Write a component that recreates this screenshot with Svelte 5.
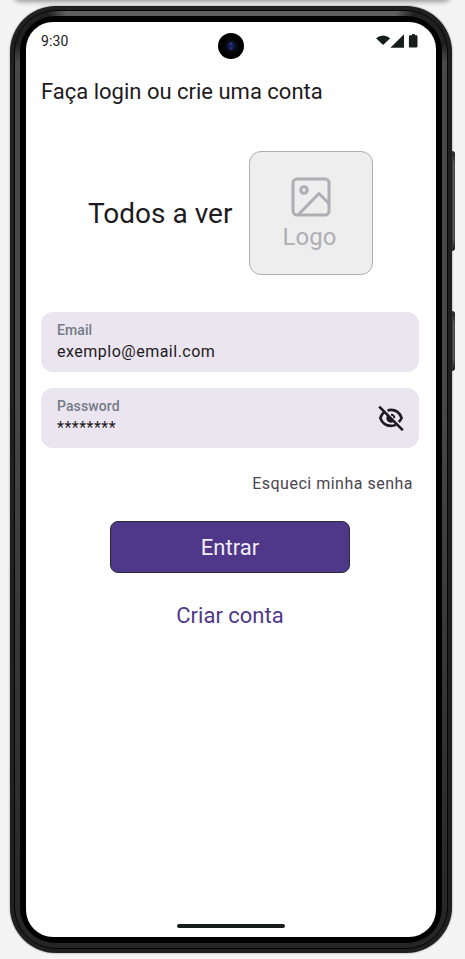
<script>
  let email = $state('exemplo@email.com');
  let password = $state('********');
</script>

<div class="stage">
  <div class="topshade"></div>
  <div class="side volume"></div>
  <div class="side power"></div>
  <div class="shell">
    <div class="rim">
      <div class="bezel">
        <main class="screen">
          <header class="status">
            <span>9:30</span>
            <svg width="44" height="16" viewBox="0 0 44 16" fill="#171d1b">
              <path d="M1 5.2Q8 -0.2 15.2 5.2L8.1 12Z" />
              <path d="M29 1.2V14.8H15.4Z" />
              <path d="M35.2 2.2h1.9V1.1h2.8v1.1h1.3q1.3 0 1.3 1.3v9.8q0 1.3-1.3 1.3h-6q-1.3 0-1.3-1.3V3.5q0-1.3 1.3-1.3Z" />
            </svg>
          </header>
          <h1>Faça login ou crie uma conta</h1>

          <section class="brand">
            <h2>Todos a ver</h2>
            <div class="logo">
              <svg width="40" height="40" viewBox="0 0 40 40" fill="none" stroke="#aeaeb5" stroke-width="3">
                <rect x="2" y="2" width="36" height="36" rx="4" />
                <circle cx="13" cy="13" r="3.3" />
                <path d="M7 38 28 16.5 38 26.5" stroke-linejoin="round" />
              </svg>
              <span>Logo</span>
            </div>
          </section>

          <form>
            <div class="field">
              <div class="label">Email</div>
              <div class="value">{email}</div>
            </div>
            <div class="field">
              <div class="label">Password</div>
              <div class="value">{password}</div>
              <svg class="eye" width="26" height="26" viewBox="0 0 26 26" fill="none" stroke="#1d1b20" stroke-width="2.6">
                <path d="M9.5 5.5Q11.2 4.9 13 4.9C18 4.9 21.8 8 23.6 13Q22.6 15.2 20.8 17" />
                <path d="M6.2 7Q3.6 9.2 2.3 13C4.2 18 8 20.9 13 20.9Q15.6 20.9 17.8 19.9" />
                <path d="M9.7 10.1A4.4 4.4 0 1 0 16.2 16Z" fill="#1d1b20" stroke="none" />
                <path d="M13 9.7A3.5 3.5 0 0 1 16.4 13.1" stroke-width="1.8" />
                <path d="M1.2 1.6 24.8 25.2" />
              </svg>
            </div>
            <div class="forgot">Esqueci minha senha</div>
            <button type="button" class="enter">Entrar</button>
            <button type="button" class="create">Criar conta</button>
          </form>
          <div class="home"></div>
        </main>
      </div>
    </div>
  </div>
  <div class="camera"></div>
</div>

<style>
  :global(body) { background: #f4f4f4; }
  .stage {
    position: relative;
    width: 465px;
    height: 959px;
    box-sizing: border-box;
    padding: 6px 13px 6px 10px;
    overflow: hidden;
    background: #f4f4f4;
    font-family: Roboto, sans-serif;
    color: #1d1b20;
  }
  .stage * { box-sizing: border-box; }
  .topshade {
    position: absolute;
    left: 15px;
    top: -10px;
    width: 434px;
    height: 10px;
    border-radius: 8px;
    box-shadow: 0 1px 5px 1px #999;
  }
  .side {
    position: absolute;
    left: 450px;
    width: 5px;
    border-radius: 0 3px 3px 0;
    background:
      linear-gradient(180deg, #151515 0, transparent 12px calc(100% - 12px), #151515 100%),
      linear-gradient(90deg, #111 0 45%, #5c5c5c 60% 80%, #333);
  }
  .volume { top: 151px; height: 100px; }
  .power { top: 311px; height: 60px; }
  .shell {
    position: relative;
    height: 947px;
    padding: 4px;
    border-radius: 46px;
    background: #202020;
    box-shadow: 0 0 2px #777;
  }
  .rim {
    height: 100%;
    padding: 5px;
    border: 1px solid #050505;
    border-radius: 42px;
    background:
      radial-gradient(circle at 10px 10px, #202020 0 24px, transparent 42px),
      radial-gradient(circle at calc(100% - 10px) 10px, #202020 0 24px, transparent 42px),
      linear-gradient(180deg, #606060 0, #484848 6%, #484848 40%, #303030 80%, #252525 100%);
  }
  .bezel {
    height: 100%;
    padding: 6px;
    border-radius: 35px;
    background: #000;
  }
  .screen {
    display: flex;
    flex-direction: column;
    height: 100%;
    padding: 0 17px 0 15px;
    border-radius: 27px;
    background: #fff;
  }
  .status {
    display: flex;
    justify-content: space-between;
    align-items: center;
    height: 38px;
    font-size: 14px;
    line-height: 20px;
    letter-spacing: 0.14px;
  }
  h1 {
    margin: 18px 0 0;
    font-size: 22px;
    line-height: 28px;
    font-weight: 400;
  }
  .brand {
    display: flex;
    align-items: center;
    margin-top: 45px;
    padding-left: 47px;
    gap: 17px;
  }
  h2 {
    margin: 2px 0 0;
    width: 144px;
    font-size: 28px;
    line-height: 36px;
    font-weight: 400;
    white-space: nowrap;
  }
  .logo {
    display: flex;
    flex-direction: column;
    align-items: center;
    width: 124px;
    height: 124px;
    padding-top: 25px;
    border: 1px solid #aeaeb2;
    border-radius: 12px;
    background: #eee;
    color: #aeaeb5;
    font-size: 24px;
    line-height: 28px;
  }
  .logo span { margin-top: 6px; margin-right: 3px; }
  form { display: flex; flex-direction: column; margin-top: 37px; }
  .field {
    position: relative;
    height: 60px;
    margin-bottom: 16px;
    padding: 8px 16px;
    border-radius: 12px;
    background: #ebe5f0;
  }
  .label {
    font-size: 14px;
    line-height: 20px;
    font-weight: 500;
    letter-spacing: 0.1px;
    color: #747b86;
  }
  .value {
    font-size: 16px;
    line-height: 24px;
    letter-spacing: 0.5px;
  }
  .eye { position: absolute; right: 15px; top: 17px; }
  .forgot {
    margin: 8px 6px 0 0;
    font-size: 16px;
    line-height: 24px;
    letter-spacing: 0.5px;
    text-align: right;
    color: #49454f;
  }
  button { font: 400 22px/28px Roboto, sans-serif; padding: 0; }
  .enter {
    width: 240px;
    height: 52px;
    margin: 25px 0 0 69px;
    padding-top: 2px;
    border: 1px solid #2c2931;
    border-radius: 8px;
    background: #4f378a;
    color: #f2edf7;
  }
  .create {
    margin: 29px 0 0 0;
    border: 0;
    background: none;
    color: #4f378a;
  }
  .home {
    width: 108px;
    height: 4px;
    margin: auto 0 9px 136px;
    border-radius: 2px;
    background: #171d1b;
  }
  .camera {
    position: absolute;
    left: 218px;
    top: 33px;
    width: 26px;
    height: 26px;
    border-radius: 50%;
    background:
      radial-gradient(circle at 13px 10.5px, #34479b 0, transparent 2px),
      radial-gradient(circle at 13px 15.5px, #2c3d8c 0, transparent 2px),
      radial-gradient(circle, #15205c 0 2px, #0a0e2a 4px, #08080c 6px, #000 9px);
  }
</style>
